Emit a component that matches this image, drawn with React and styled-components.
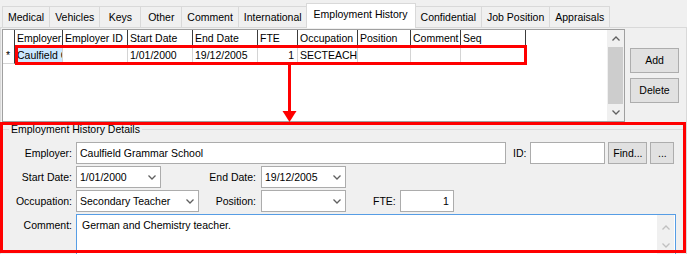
import React from "react";
import styled, { createGlobalStyle, css } from "styled-components";

const GlobalStyle = createGlobalStyle`
  html, body { margin: 0; padding: 0; background: #f0f0f0; }
  body {
    font-family: "Liberation Sans", Arial, sans-serif;
    font-size: 10.5px;
    color: #000;
  }
  * { box-sizing: border-box; }
`;

const Page = styled.div`
  position: relative;
  width: 687px;
  height: 254px;
  overflow: hidden;
  background: #f0f0f0;
`;

const TabBar = styled.div`
  display: flex;
  align-items: flex-end;
  height: 27px;
  padding-left: 2px;
`;

const Tab = styled.div`
  height: 21px;
  min-width: 42px;
  padding: 0 5px;
  display: flex;
  align-items: center;
  justify-content: center;
  border: 1px solid #d9d9d9;
  border-bottom: none;
  background: #f0f0f0;
  margin-right: -1px;
  white-space: nowrap;
  ${(p) =>
    p.$active &&
    css`
      height: 25px;
      background: #fff;
      padding: 0 7px 4px;
      margin: 0 -1px -1px -1px;
      position: relative;
      z-index: 1;
    `}
`;

const TabPanel = styled.div`
  border: 1px solid #d9d9d9;
  border-bottom: none;
  background: #f0f0f0;
  height: 227px;
  padding-left: 1px;
  display: flex;
  flex-direction: column;
`;

const TopArea = styled.div`
  display: flex;
  height: 94px;
  padding-top: 1px;
  flex-shrink: 0;
`;

const GridBox = styled.div`
  width: 623px;
  height: 93px;
  border: 1px solid #a0a0a0;
  background: #fff;
  display: flex;
`;

const GridTable = styled.div`
  flex: 1;
  display: flex;
  flex-direction: column;
`;

const GridRow = styled.div`
  display: flex;
  height: 17px;
`;

const HeadCell = styled.div`
  width: ${(p) => p.$w}px;
  flex-shrink: 0;
  border-right: 1px solid #3c3c3c;
  padding-left: 2px;
  line-height: 17px;
  white-space: nowrap;
  overflow: hidden;
`;

const Cell = styled.div`
  width: ${(p) => p.$w}px;
  flex-shrink: 0;
  border-right: 1px solid ${(p) => (p.$rowHead ? "#3c3c3c" : "#d4d4d4")};
  border-bottom: 1px solid #d4d4d4;
  padding: 0 ${(p) => (p.$right ? 3 : 0)}px 0 ${(p) => (p.$rowHead ? 3 : 2)}px;
  line-height: 16px;
  white-space: nowrap;
  overflow: hidden;
  text-align: ${(p) => (p.$right ? "right" : "left")};
  background: ${(p) => (p.$selected ? "#cce8ff" : "#fff")};
`;

const VScroll = styled.div`
  width: 17px;
  background: #f0f0f0;
  display: flex;
  flex-direction: column;
`;

const ScrollArrow = styled.div`
  height: 17px;
  display: flex;
  align-items: center;
  justify-content: center;
  flex-shrink: 0;
`;

const ScrollThumb = styled.div`
  flex: 1;
  margin: 0 1px;
  background: #cdcdcd;
`;

const ButtonCol = styled.div`
  flex: 1;
  display: flex;
  flex-direction: column;
  align-items: center;
  gap: 5px;
  padding-top: 19px;
  padding-right: 2px;
`;

const Button = styled.button`
  width: ${(p) => p.$w}px;
  height: ${(p) => p.$h}px;
  margin-left: ${(p) => p.$ml || 0}px;
  flex-shrink: 0;
  background: #e1e1e1;
  border: 1px solid #adadad;
  font: inherit;
  color: #000;
  padding: 0;
  line-height: 1;
`;

const Details = styled.div`
  flex: 1;
  display: flex;
  flex-direction: column;
`;

const GroupHeader = styled.div`
  display: flex;
  align-items: center;
  height: 14px;
  flex-shrink: 0;
`;

const GroupLine = styled.div`
  height: 1px;
  background: #dcdcdc;
  width: ${(p) => (p.$grow ? "auto" : "7px")};
  flex: ${(p) => (p.$grow ? 1 : "none")};
`;

const GroupTitle = styled.span`
  padding: 0 2px;
  white-space: nowrap;
`;

const Form = styled.div`
  display: flex;
  flex-direction: column;
  gap: 2px;
  padding-top: 6px;
`;

const FormRow = styled.div`
  display: flex;
  align-items: ${(p) => (p.$top ? "flex-start" : "center")};
  height: ${(p) => (p.$tall ? "auto" : "22px")};
`;

const Label = styled.div`
  width: ${(p) => (p.$w ? `${p.$w}px` : "auto")};
  margin-left: ${(p) => p.$ml || 0}px;
  flex-shrink: 0;
  text-align: right;
  white-space: nowrap;
  padding-top: ${(p) => (p.$top ? 5 : 0)}px;
`;

const TextBox = styled.div`
  width: ${(p) => p.$w}px;
  height: 22px;
  margin-left: ${(p) => p.$ml || 0}px;
  flex-shrink: 0;
  background: #fff;
  border: 1px solid #acacac;
  padding: 0 ${(p) => (p.$right ? 4 : 0)}px 0 3px;
  line-height: 20px;
  text-align: ${(p) => (p.$right ? "right" : "left")};
  white-space: nowrap;
  overflow: hidden;
`;

const Combo = styled.div`
  width: ${(p) => p.$w}px;
  height: 22px;
  margin-left: ${(p) => p.$ml || 0}px;
  flex-shrink: 0;
  background: #fff;
  border: 1px solid #acacac;
  display: flex;
  align-items: center;
  padding: 0 4px 0 3px;
`;

const ComboText = styled.span`
  flex: 1;
  white-space: nowrap;
  overflow: hidden;
`;

const Memo = styled.div`
  width: 600px;
  height: 48px;
  margin-left: 4px;
  flex-shrink: 0;
  background: #fff;
  border: 1px solid #569de5;
  display: flex;
`;

const MemoText = styled.div`
  flex: 1;
  padding: 4px 0 0 5px;
`;

const MemoScroll = styled.div`
  width: 17px;
  margin-right: 1px;
  background: #f0f0f0;
  display: flex;
  flex-direction: column;
  padding-top: 4px;
  gap: 1px;
`;

const RowHighlight = styled.div`
  position: absolute;
  left: 15px;
  top: 45px;
  width: 512px;
  height: 20px;
  border: 3px solid #ff0000;
  pointer-events: none;
`;

const DetailsHighlight = styled.div`
  position: absolute;
  left: 0;
  top: 122px;
  width: 686px;
  height: 131px;
  border: 3px solid #ff0000;
  pointer-events: none;
`;

const ArrowSvg = styled.svg`
  position: absolute;
  left: 282px;
  top: 64px;
  pointer-events: none;
`;

const Chevron = ({ up, color = "#606060" }) => (
  <svg width="8" height="5" viewBox="0 0 8 5">
    <path
      d={up ? "M0.5 4.5 L4 1 L7.5 4.5" : "M0.5 0.5 L4 4 L7.5 0.5"}
      fill="none"
      stroke={color}
      strokeWidth="1.3"
    />
  </svg>
);

const tabs = [
  "Medical",
  "Vehicles",
  "Keys",
  "Other",
  "Comment",
  "International",
  "Employment History",
  "Confidential",
  "Job Position",
  "Appraisals",
];

const columns = [
  { name: "", w: 12, rowHead: true },
  { name: "Employer", w: 48 },
  { name: "Employer ID", w: 65 },
  { name: "Start Date", w: 65 },
  { name: "End Date", w: 65 },
  { name: "FTE", w: 40 },
  { name: "Occupation", w: 60 },
  { name: "Position", w: 53 },
  { name: "Comment", w: 50 },
  { name: "Seq", w: 65 },
];

const rowData = ["*", "Caulfield Grammar School", "", "1/01/2000", "19/12/2005", "1", "SECTEACH", "", "", ""];

export default function App() {
  return (
    <Page>
      <GlobalStyle />
      <TabBar>
        {tabs.map((t) => (
          <Tab key={t} $active={t === "Employment History"}>
            {t}
          </Tab>
        ))}
      </TabBar>
      <TabPanel>
        <TopArea>
          <GridBox>
            <GridTable>
              <GridRow>
                {columns.map((c, i) => (
                  <HeadCell key={i} $w={c.w}>
                    {c.name}
                  </HeadCell>
                ))}
              </GridRow>
              <GridRow>
                {columns.map((c, i) => (
                  <Cell
                    key={i}
                    $w={c.w}
                    $rowHead={c.rowHead}
                    $selected={i === 1}
                    $right={c.name === "FTE"}
                  >
                    {rowData[i]}
                  </Cell>
                ))}
              </GridRow>
            </GridTable>
            <VScroll>
              <ScrollArrow>
                <Chevron up />
              </ScrollArrow>
              <ScrollThumb />
              <ScrollArrow>
                <Chevron />
              </ScrollArrow>
            </VScroll>
          </GridBox>
          <ButtonCol>
            <Button $w={49} $h={25}>Add</Button>
            <Button $w={49} $h={25}>Delete</Button>
          </ButtonCol>
        </TopArea>
        <Details>
          <GroupHeader>
            <GroupLine />
            <GroupTitle>Employment History Details</GroupTitle>
            <GroupLine $grow />
          </GroupHeader>
          <Form>
            <FormRow>
              <Label $w={70}>Employer:</Label>
              <TextBox $w={430} $ml={4}>Caulfield Grammar School</TextBox>
              <Label $ml={7}>ID:</Label>
              <TextBox $w={75} $ml={4} />
              <Button $w={39} $h={22} $ml={3}>Find...</Button>
              <Button $w={24} $h={22} $ml={3}>...</Button>
            </FormRow>
            <FormRow>
              <Label $w={70}>Start Date:</Label>
              <Combo $w={85} $ml={4}>
                <ComboText>1/01/2000</ComboText>
                <Chevron />
              </Combo>
              <Label $w={95}>End Date:</Label>
              <Combo $w={85} $ml={5}>
                <ComboText>19/12/2005</ComboText>
                <Chevron />
              </Combo>
            </FormRow>
            <FormRow>
              <Label $w={70}>Occupation:</Label>
              <Combo $w={123} $ml={4}>
                <ComboText>Secondary Teacher</ComboText>
                <Chevron />
              </Combo>
              <Label $w={57}>Position:</Label>
              <Combo $w={85} $ml={5}>
                <ComboText />
                <Chevron />
              </Combo>
              <Label $ml={27}>FTE:</Label>
              <TextBox $w={54} $ml={4} $right>1</TextBox>
            </FormRow>
            <FormRow $top $tall>
              <Label $w={70} $top>Comment:</Label>
              <Memo>
                <MemoText>German and Chemistry teacher.</MemoText>
                <MemoScroll>
                  <ScrollArrow>
                    <Chevron up color="#c0c0c0" />
                  </ScrollArrow>
                  <ScrollArrow>
                    <Chevron color="#c0c0c0" />
                  </ScrollArrow>
                </MemoScroll>
              </Memo>
            </FormRow>
          </Form>
        </Details>
      </TabPanel>
      <RowHighlight />
      <ArrowSvg width="16" height="60" viewBox="0 0 16 60">
        <rect x="6" y="0" width="3" height="49" fill="#ff0000" />
        <polygon points="0.5,47 14.5,47 7.5,58" fill="#ff0000" />
      </ArrowSvg>
      <DetailsHighlight />
    </Page>
  );
}
